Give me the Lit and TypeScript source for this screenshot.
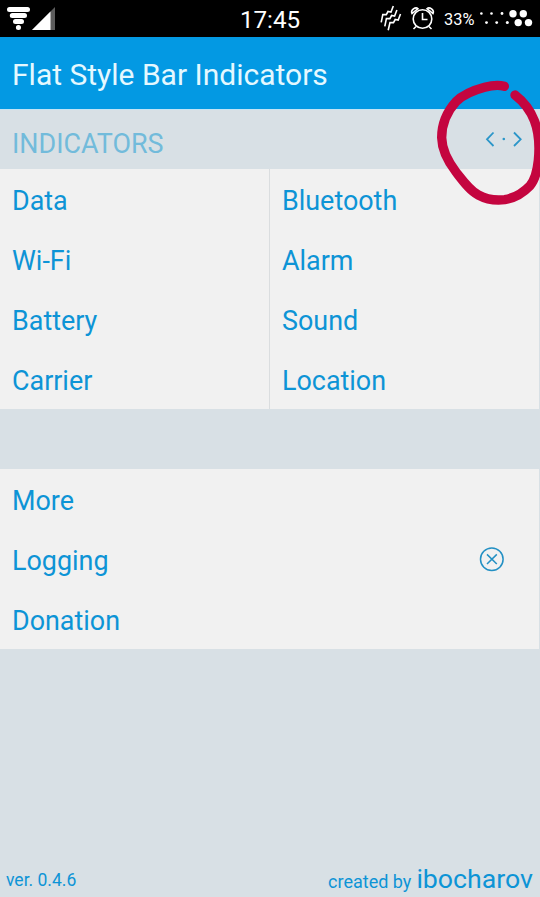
import { LitElement, html, css } from "lit";
import { customElement } from "lit/decorators.js";

const LEFT = ["Data", "Wi-Fi", "Battery", "Carrier"];
const RIGHT = ["Bluetooth", "Alarm", "Sound", "Location"];

@customElement("app-root")
export class AppRoot extends LitElement {
  static styles = css`
    :host {
      display: flex;
      flex-direction: column;
      position: relative;
      width: 540px;
      height: 897px;
      overflow: hidden;
      background: #d8e0e5;
      color: #0d94d6;
      font-family: Roboto, sans-serif;
      font-size: 26.9px;
      white-space: nowrap;
    }
    svg { display: block; flex: none; }
    .status {
      display: grid;
      grid-template-columns: 1fr auto 1fr;
      height: 37px;
      flex: none;
      background: #000;
      color: #fff;
    }
    .clock { font-size: 24.2px; line-height: 41px; }
    .tray { display: flex; justify-content: flex-end; }
    .pct { font-size: 16.4px; line-height: 40px; width: 35px; }
    .title {
      height: 72px;
      flex: none;
      box-sizing: border-box;
      padding-left: 12px;
      line-height: 75px;
      font-size: 30px;
      background: #0399e3;
      color: #e4f8ff;
    }
    .section {
      display: flex;
      justify-content: space-between;
      height: 60px;
      flex: none;
      padding-left: 12px;
      line-height: 70px;
      color: #72bbdb;
      box-shadow: inset 0 1px #c3e4f5;
    }
    .cols { display: grid; grid-template-columns: 269px 269px; column-gap: 1px; width: 539px; background: #dadddf; flex: none; }
    .panel { background: #f1f1f1; width: 539px; margin-top: 60px; flex: none; }
    .col { background: #f1f1f1; }
    .row {
      display: flex;
      justify-content: space-between;
      height: 60px;
      padding-left: 12px;
      line-height: 64px;
    }
    .footer {
      display: flex;
      justify-content: space-between;
      align-items: flex-start;
      margin-top: auto;
      padding: 0 7px 0 6px;
      height: 36px;
      line-height: 36px;
    }
    .ver { font-size: 17.5px; line-height: 39px; }
    .credit { display: flex; align-items: baseline; gap: 5px; }
    .by { font-size: 18px; }
    .author { font-size: 26.7px; }
    .mark { position: absolute; left: 430px; top: 75px; }
  `;

  private row(label: string) {
    return html`<div class="row"><span>${label}</span></div>`;
  }

  render() {
    return html`
      <div class="status">
        <svg width="60" height="37" viewBox="0 0 60 37">
          <g stroke="#fff" stroke-width="5" stroke-linecap="round">
            <path d="M9.5 9.5H27.5M12.3 15.5H24.5M15.5 21.5H21.5M18.4 27.4h.1" />
          </g>
          <path d="M55 7V30H32Z" fill="#5c5c5c" />
          <path d="M50.5 11.5V30H32Z" fill="#fff" />
        </svg>
        <span class="clock">17:45</span>
        <div class="tray">
          <svg width="64" height="37" viewBox="380 0 64 37" fill="none" stroke="#fff" stroke-width="1.6">
            <path d="M393.3 6L391 12L388 11.5L386.3 14.6L382.8 14.6L381.2 22.3M396.9 10L394.6 16L391.6 15.5L389.9 18.6L386.4 18.6L384.8 26.3M400.5 14L398.2 20L395.2 19.5L393.5 22.6L390 22.6L388.2 30.3" />
            <circle cx="422.5" cy="19" r="9.3" />
            <path d="M422.5 13v6.5h5M416 26.5l-2.5 2.5M429 26.5l2.5 2.5" />
            <path d="M412 13.5c-1.7-3.2 3.5-7.3 6-4.8zM433 13.5c1.7-3.2-3.5-7.3-6-4.8z" />
          </svg>
          <span class="pct">33%</span>
          <svg width="61" height="37" viewBox="479 0 61 37" fill="#fff">
            <circle cx="481.4" cy="13.5" r="1.3" /><circle cx="491.5" cy="13.5" r="1.3" />
            <circle cx="502" cy="13.5" r="1.4" /><circle cx="486.5" cy="22.6" r="1.4" />
            <circle cx="496.7" cy="22.6" r="1.4" /><circle cx="507.3" cy="22.6" r="1.5" />
            <circle cx="513" cy="13.7" r="3.7" /><circle cx="523.3" cy="13.7" r="3.7" />
            <circle cx="518.2" cy="22.6" r="3.7" /><circle cx="528.5" cy="22.6" r="3.7" />
          </svg>
        </div>
      </div>
      <div class="title"><span>Flat Style Bar Indicators</span></div>
      <div class="section">
        <span>INDICATORS</span>
        <svg width="60" height="60" viewBox="480 109 60 60" fill="none" stroke="#2b96c9" stroke-width="1.8">
          <path d="M493.5 132.5L487 139.3L493.5 146M514 132.5L520.7 139.3L514 146" />
          <circle cx="503.8" cy="139" r="1.3" fill="#2b96c9" stroke="none" />
        </svg>
      </div>
      <div class="cols">
        <div class="col">${LEFT.map((l) => this.row(l))}</div>
        <div class="col">${RIGHT.map((l) => this.row(l))}</div>
      </div>
      <div class="panel">
        ${this.row("More")}
        <div class="row">
          <span>Logging</span>
          <svg width="60" height="60" viewBox="479 529 60 60" fill="none" stroke="#2390c4" stroke-width="1.5">
            <circle cx="491.8" cy="559.2" r="11.3" />
            <path d="M487 554.4l9.8 9.6M496.8 554.4l-9.8 9.6" />
          </svg>
        </div>
        ${this.row("Donation")}
      </div>
      <div class="footer">
        <span class="ver">ver. 0.4.6</span>
        <div class="credit"><span class="by">created by</span><span class="author">ibocharov</span></div>
      </div>
      <svg class="mark" width="110" height="135" viewBox="0 0 330 405" fill="none" stroke="#c4053f" stroke-width="28" stroke-linecap="round" stroke-linejoin="round">
        <path d="M223 34C206 29 186 31 164 37C130 46 101 57 78 80C51 110 35 145 35 188C36 229 55 261 78 291C99 318 120 347 145 360C169 373 199 377 224 374C253 369 279 354 300 332C317 312 322 285 325 256C329 215 325 168 313 137C302 109 280 79 255 60" />
      </svg>
    `;
  }
}
